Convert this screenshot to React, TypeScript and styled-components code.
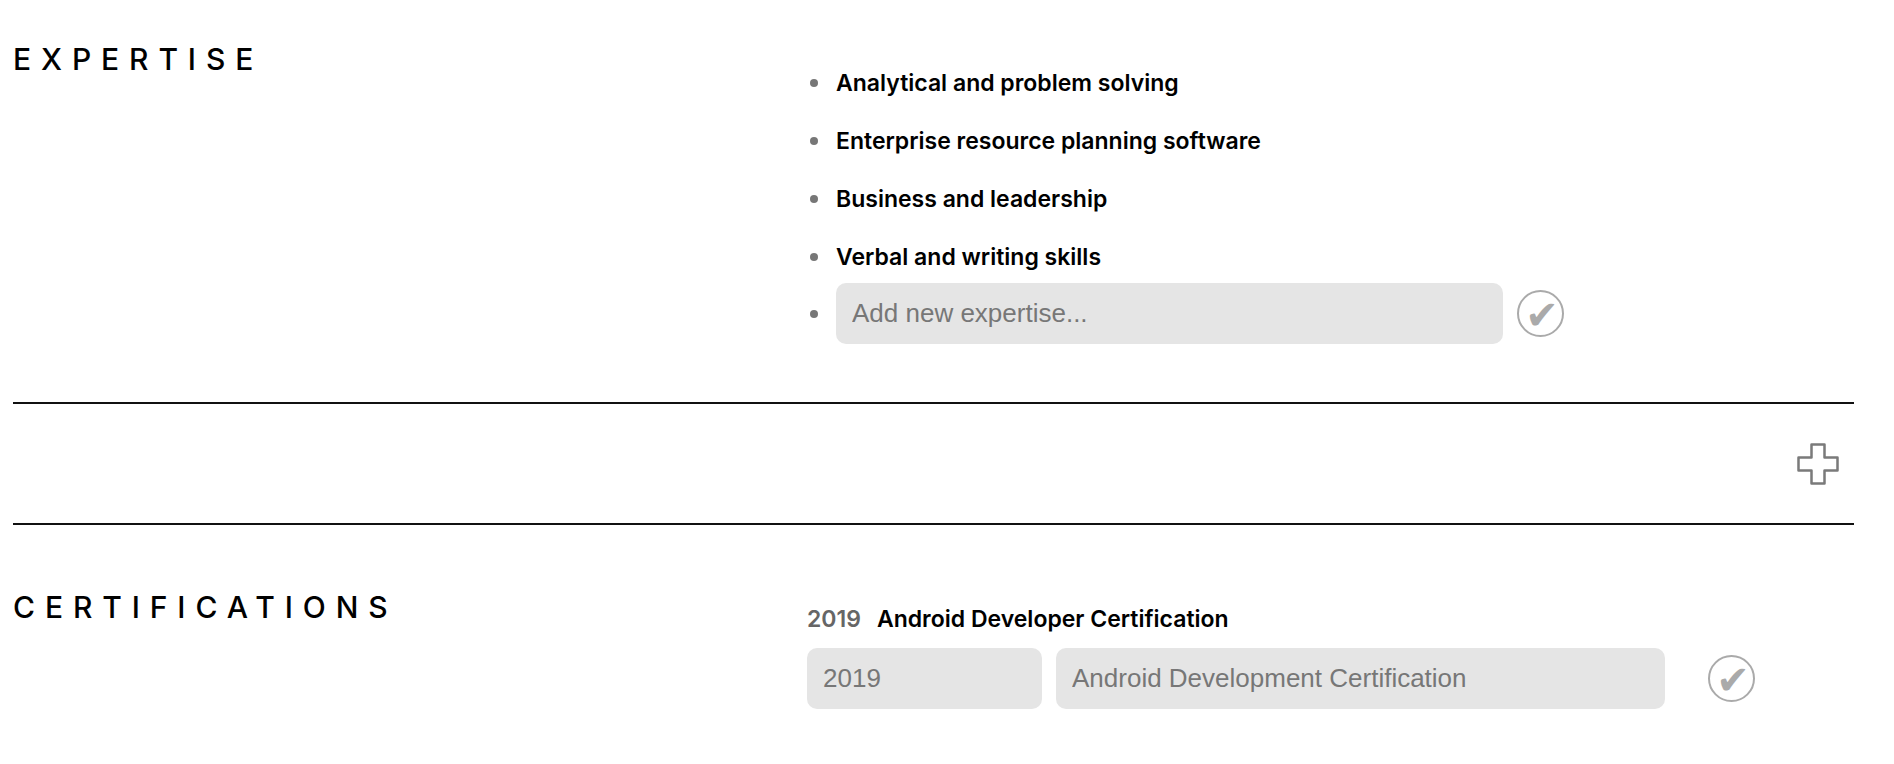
import React from 'react';
import styled, { createGlobalStyle } from 'styled-components';

const expertise = [
  'Analytical and problem solving',
  'Enterprise resource planning software',
  'Business and leadership',
  'Verbal and writing skills',
];

const GlobalStyle = createGlobalStyle`
  body {
    margin: 0;
    background: #fff;
    font-family: Inter, "Noto Sans", sans-serif;
    color: #000;
  }
`;

const Page = styled.div`
  padding: 0 40px 0 13px;
`;

const Section = styled.section<{ $top: number }>`
  display: grid;
  grid-template-columns: 794px 1fr;
  padding-top: ${(p) => p.$top}px;
`;

const Heading = styled.h2`
  margin: 0;
  font-size: 30px;
  line-height: 36px;
  font-weight: 500;
  letter-spacing: 9.9px;
`;

const List = styled.ul`
  list-style: none;
  margin: 0;
  padding: 13px 0 0;
`;

const Item = styled.li<{ $h?: number }>`
  display: flex;
  align-items: center;
  height: ${(p) => p.$h ?? 58}px;
  font-size: 23px;
  font-weight: 600;
  &::before {
    content: '';
    flex: none;
    width: 8px;
    height: 8px;
    border-radius: 50%;
    background: #777;
    margin: 0 18px 0 3px;
  }
`;

const Field = styled.input<{ $w: number }>`
  flex: none;
  box-sizing: border-box;
  width: ${(p) => p.$w}px;
  height: 61px;
  border: none;
  outline: none;
  border-radius: 10px;
  background: #e5e5e5;
  padding: 0 16px;
  font-family: "Liberation Sans", Arial, sans-serif;
  font-size: 26px;
  color: #777;
  &::placeholder {
    color: #777;
  }
`;

const CheckButton = styled.button<{ $gap: number }>`
  flex: none;
  width: 47px;
  height: 47px;
  margin-left: ${(p) => p.$gap}px;
  border: 2px solid #aaa;
  border-radius: 50%;
  background: #fff;
  color: #aaa;
  font-size: 40px;
  line-height: 1;
  padding: 3px 0 0 3px;
  display: flex;
  align-items: center;
  justify-content: center;
  overflow: visible;
  font-family: "DejaVu Sans", sans-serif;
`;

const Divider = styled.div`
  margin-top: 61px;
  height: 119px;
  border-top: 2px solid #111;
  border-bottom: 2px solid #111;
  display: flex;
  align-items: center;
  justify-content: flex-end;
  padding-right: 15px;
`;

const AddButton = styled.button`
  border: none;
  background: none;
  padding: 0;
  width: 42px;
  height: 42px;
  display: flex;
`;

const CertBody = styled.div`
  padding-top: 16px;
`;

const CertLine = styled.div`
  display: flex;
  gap: 16px;
  font-size: 23px;
  line-height: 28px;
  margin-bottom: 15px;
`;

const Year = styled.span`
  color: #666;
  font-weight: 600;
`;

const CertTitle = styled.span`
  font-weight: 600;
`;

const FieldRow = styled.div`
  display: flex;
  align-items: center;
  gap: 14px;
`;

const Check = ({ gap }: { gap: number }) => (
  <CheckButton $gap={gap} aria-label="save">
    ✔
  </CheckButton>
);

const App: React.FC = () => (
  <Page>
    <GlobalStyle />
    <Section $top={41}>
      <Heading>EXPERTISE</Heading>
      <List>
        {expertise.map((e, i) => (
          <Item key={i}>{e}</Item>
        ))}
        <Item $h={55}>
          <Field $w={667} placeholder="Add new expertise..." />
          <Check gap={14} />
        </Item>
      </List>
    </Section>
    <Divider>
      <AddButton aria-label="add section">
        <svg width="42" height="42" viewBox="0 0 42 42">
          <path
            d="M14.5 1.5h13v13h13v13h-13v13h-13v-13h-13v-13h13z"
            fill="none"
            stroke="#7a7a7a"
            strokeWidth="2.5"
            strokeLinejoin="round"
          />
        </svg>
      </AddButton>
    </Divider>
    <Section $top={64}>
      <Heading>CERTIFICATIONS</Heading>
      <CertBody>
        <CertLine>
          <Year>2019</Year>
          <CertTitle>Android Developer Certification</CertTitle>
        </CertLine>
        <FieldRow>
          <Field $w={235} defaultValue="2019" />
          <Field $w={609} defaultValue="Android Development Certification" />
          <Check gap={29} />
        </FieldRow>
      </CertBody>
    </Section>
  </Page>
);

export default App;
